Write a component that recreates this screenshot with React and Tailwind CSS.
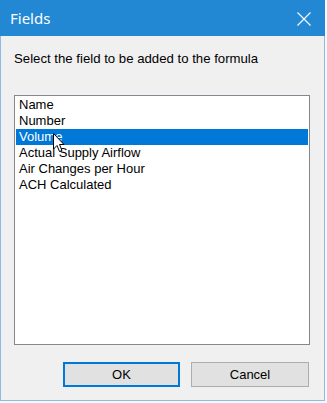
export default function App() {
  const items = ["Name", "Number", "Volume", "Actual Supply Airflow", "Air Changes per Hour", "ACH Calculated"];
  return (
    <div className="w-[327px] h-[403px] bg-[#f4f8fb]">
      <div className="w-[325px] h-[401px] flex flex-col border-x border-b border-[#8dbbe3] bg-[#f0f0f0]" style={{ fontFamily: '"Liberation Sans", Arial, sans-serif' }}>
        <div className="h-[36px] -mx-px bg-[#2288d4] flex items-center justify-between pl-[10px] pr-[14px] shrink-0">
          <span className="text-white text-[15px]" style={{ fontFamily: '"Noto Sans", "Open Sans", sans-serif' }}>Fields</span>
          <svg width="14" height="14" viewBox="0 0 14 14" className="mt-[1px]">
            <path d="M0.5 0.5 L13.5 13.5 M13.5 0.5 L0.5 13.5" stroke="white" strokeWidth="1.1" fill="none" />
          </svg>
        </div>
        <div className="pl-[13px] pt-[15px] text-[13.2px] text-black leading-[16px]">Select the field to be added to the formula</div>
        <div className="relative mt-[28px] ml-[13px] w-[296px] h-[250px] bg-white border border-[#828790] pt-[1px] pl-[1px] pr-[1px]">
          {items.map((t, i) => (
            <div key={t} className={"h-[16px] leading-[16px] text-[13px] pl-[3px] " + (i === 2 ? "bg-[#0078d7] text-white" : "text-black")}>{t}</div>
          ))}
          <svg className="absolute left-[38px] top-[37px]" width="12" height="20" viewBox="0 0 12 20">
            <path d="M0.5 0.5 L0.5 16 L4 12.5 L6.5 18.5 L9 17.5 L6.5 11.5 L11 11.5 Z" fill="white" stroke="black" strokeWidth="1" strokeLinejoin="miter" />
          </svg>
        </div>
        <div className="flex ml-[62px] mt-[17px] gap-[11px]">
          <button className="w-[117px] h-[25px] bg-[#e1e1e1] border-2 border-[#0078d7] text-[13px] text-black">OK</button>
          <button className="w-[118px] h-[25px] bg-[#e1e1e1] border border-[#adadad] text-[13px] text-black">Cancel</button>
        </div>
      </div>
    </div>
  );
}
